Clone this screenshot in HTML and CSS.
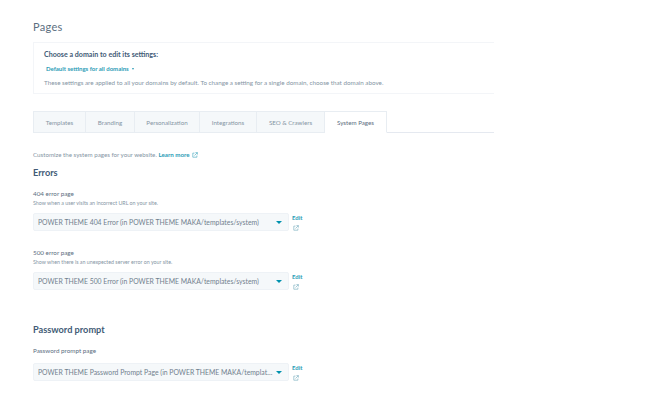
FILE: index.html
```html
<!DOCTYPE html>
<html lang="en">
<head>
<meta charset="utf-8">
<title>Pages</title>
<link rel="stylesheet" href="styles.css">
</head>
<body>
<svg class="defs" width="0" height="0" aria-hidden="true">
  <symbol id="ext" viewBox="0 0 12 12">
    <path d="M5 2.2H1.6v8.2h8.2V7M6.8 1.2h4v4M10.6 1.4 5 7" fill="none" stroke="currentColor" stroke-width="1.1"/>
  </symbol>
</svg>
<main class="page">
  <h1 class="title">Pages</h1>
  <section class="domain-card">
    <h2 class="domain-heading">Choose a domain to edit its settings:</h2>
    <div class="domain-select">Default settings for all domains <span class="mini-caret"></span></div>
    <p class="domain-note">These settings are applied to all your domains by default. To change a setting for a single domain, choose that domain above.</p>
  </section>
  <nav class="tabs">
    <a class="tab tab-templates">Templates</a>
    <a class="tab tab-branding">Branding</a>
    <a class="tab tab-personal">Personalization</a>
    <a class="tab tab-integrations">Integrations</a>
    <a class="tab tab-seo">SEO &amp; Crawlers</a>
    <a class="tab tab-active">System Pages</a>
  </nav>
  <p class="intro">Customize the system pages for your website. <a class="learn">Learn more <svg class="ext-learn"><use href="#ext"/></svg></a></p>
  <h2 class="section-title">Errors</h2>
  <div class="field">
    <div class="field-label">404 error page</div>
    <div class="field-help">Show when a user visits an incorrect URL on your site.</div>
    <div class="field-row">
      <div class="select"><span class="select-text">POWER THEME 404 Error (in POWER THEME MAKA/templates/system)</span><span class="caret"></span></div>
      <a class="edit"><span>Edit</span><svg class="ext-edit"><use href="#ext"/></svg></a>
    </div>
  </div>
  <div class="field field-second">
    <div class="field-label">500 error page</div>
    <div class="field-help">Show when there is an unexpected server error on your site.</div>
    <div class="field-row">
      <div class="select"><span class="select-text">POWER THEME 500 Error (in POWER THEME MAKA/templates/system)</span><span class="caret"></span></div>
      <a class="edit"><span>Edit</span><svg class="ext-edit"><use href="#ext"/></svg></a>
    </div>
  </div>
  <h2 class="section-title section-password">Password prompt</h2>
  <div class="field field-password">
    <div class="field-label">Password prompt page</div>
    <div class="field-row row-password">
      <div class="select"><span class="select-text">POWER THEME Password Prompt Page (in POWER THEME MAKA/templates/system)</span><span class="caret"></span></div>
      <a class="edit"><span>Edit</span><svg class="ext-edit"><use href="#ext"/></svg></a>
    </div>
  </div>
</main>
</body>
</html>
```
FILE: styles.css
```css
* { box-sizing: border-box; }
html, body { margin: 0; padding: 0; background: #fff; }
body { width: 670px; height: 402px; overflow: hidden; font-family: Lato, "Open Sans", sans-serif; color: #33475b; }
.defs { display: block; height: 0; }
.page { width: 461px; margin-left: 33px; padding-top: 20px; }
.title { margin: 0; font-size: 11px; line-height: 14px; font-weight: 400; letter-spacing: .3px; color: #5b6e80; }
.domain-card { margin-top: 8px; height: 52px; border: 1px solid #f3f5f8; border-right: 0; padding: 7px 10px 0; }
.domain-heading { margin: 0; font-size: 7.1px; line-height: 10px; font-weight: 700; color: #425b76; }
.domain-select { margin: 5px 0 0 2px; font-size: 6px; line-height: 8px; font-weight: 700; color: #2b9cb6; }
.mini-caret { display: inline-block; margin: 0 0 1px 2px; border: 1.5px solid transparent; border-top: 2px solid #2b9cb6; border-bottom: 0; vertical-align: middle; }
.domain-note { margin: 6px 0 0; font-size: 6.28px; line-height: 8px; color: #8595a4; white-space: nowrap; }
.tabs { display: flex; margin-top: 17px; height: 22px; border-bottom: 1px solid #e5e9f0; }
.tab { display: flex; align-items: center; justify-content: center; height: 22px; font-size: 6.2px; color: #8595a4; background: #f5f8fa; border: 1px solid #e8edf2; border-left-width: 0; }
.tab-templates { width: 53px; border-left-width: 1px; }
.tab-branding { width: 49px; }
.tab-personal { width: 65px; }
.tab-integrations { width: 57px; }
.tab-seo { width: 68px; }
.tab-active { width: 62px; background: #fff; border-bottom-color: #fff; color: #5b6e80; }
.intro { margin: 18px 0 0; font-size: 6.2px; line-height: 8px; color: #8595a4; }
.learn { font-weight: 700; color: #2b9cb6; }
.ext-learn { width: 6px; height: 6px; vertical-align: -0.5px; margin-left: 1px; }
.section-title { margin: 8px 0 0; font-size: 9.2px; line-height: 12px; font-weight: 700; color: #425b76; }
.field { margin-top: 11px; }
.field-second { margin-top: 18px; }
.field-label { font-size: 6.3px; line-height: 8px; color: #5b6e80; }
.field-help { margin-top: 2px; font-size: 5.3px; line-height: 7px; color: #8595a4; }
.field-row { display: flex; align-items: flex-start; gap: 3px; margin-top: 6px; }
.select { display: flex; align-items: center; width: 256px; height: 18px; padding: 0 6px 0 4px; background: #f5f8fa; border: 1px solid #eef2f6; border-radius: 2px; font-size: 6.85px; color: #71808e; }
.select-text { flex: 1; min-width: 0; overflow: hidden; white-space: nowrap; text-overflow: ellipsis; }
.caret { flex: none; margin-left: 1px; border: 3px solid transparent; border-top: 3.5px solid #0091ae; border-bottom: 0; }
.edit { display: flex; flex-direction: column; align-items: flex-start; gap: 4px; margin-top: 1px; font-size: 6px; line-height: 7px; font-weight: 700; color: #2b9cb6; }
.ext-edit { width: 6px; height: 6px; margin-left: 1px; color: #5f9fb3; }
.section-password { margin-top: 34px; }
.field-password { margin-top: 11px; }
.row-password { margin-top: 8px; }
```
